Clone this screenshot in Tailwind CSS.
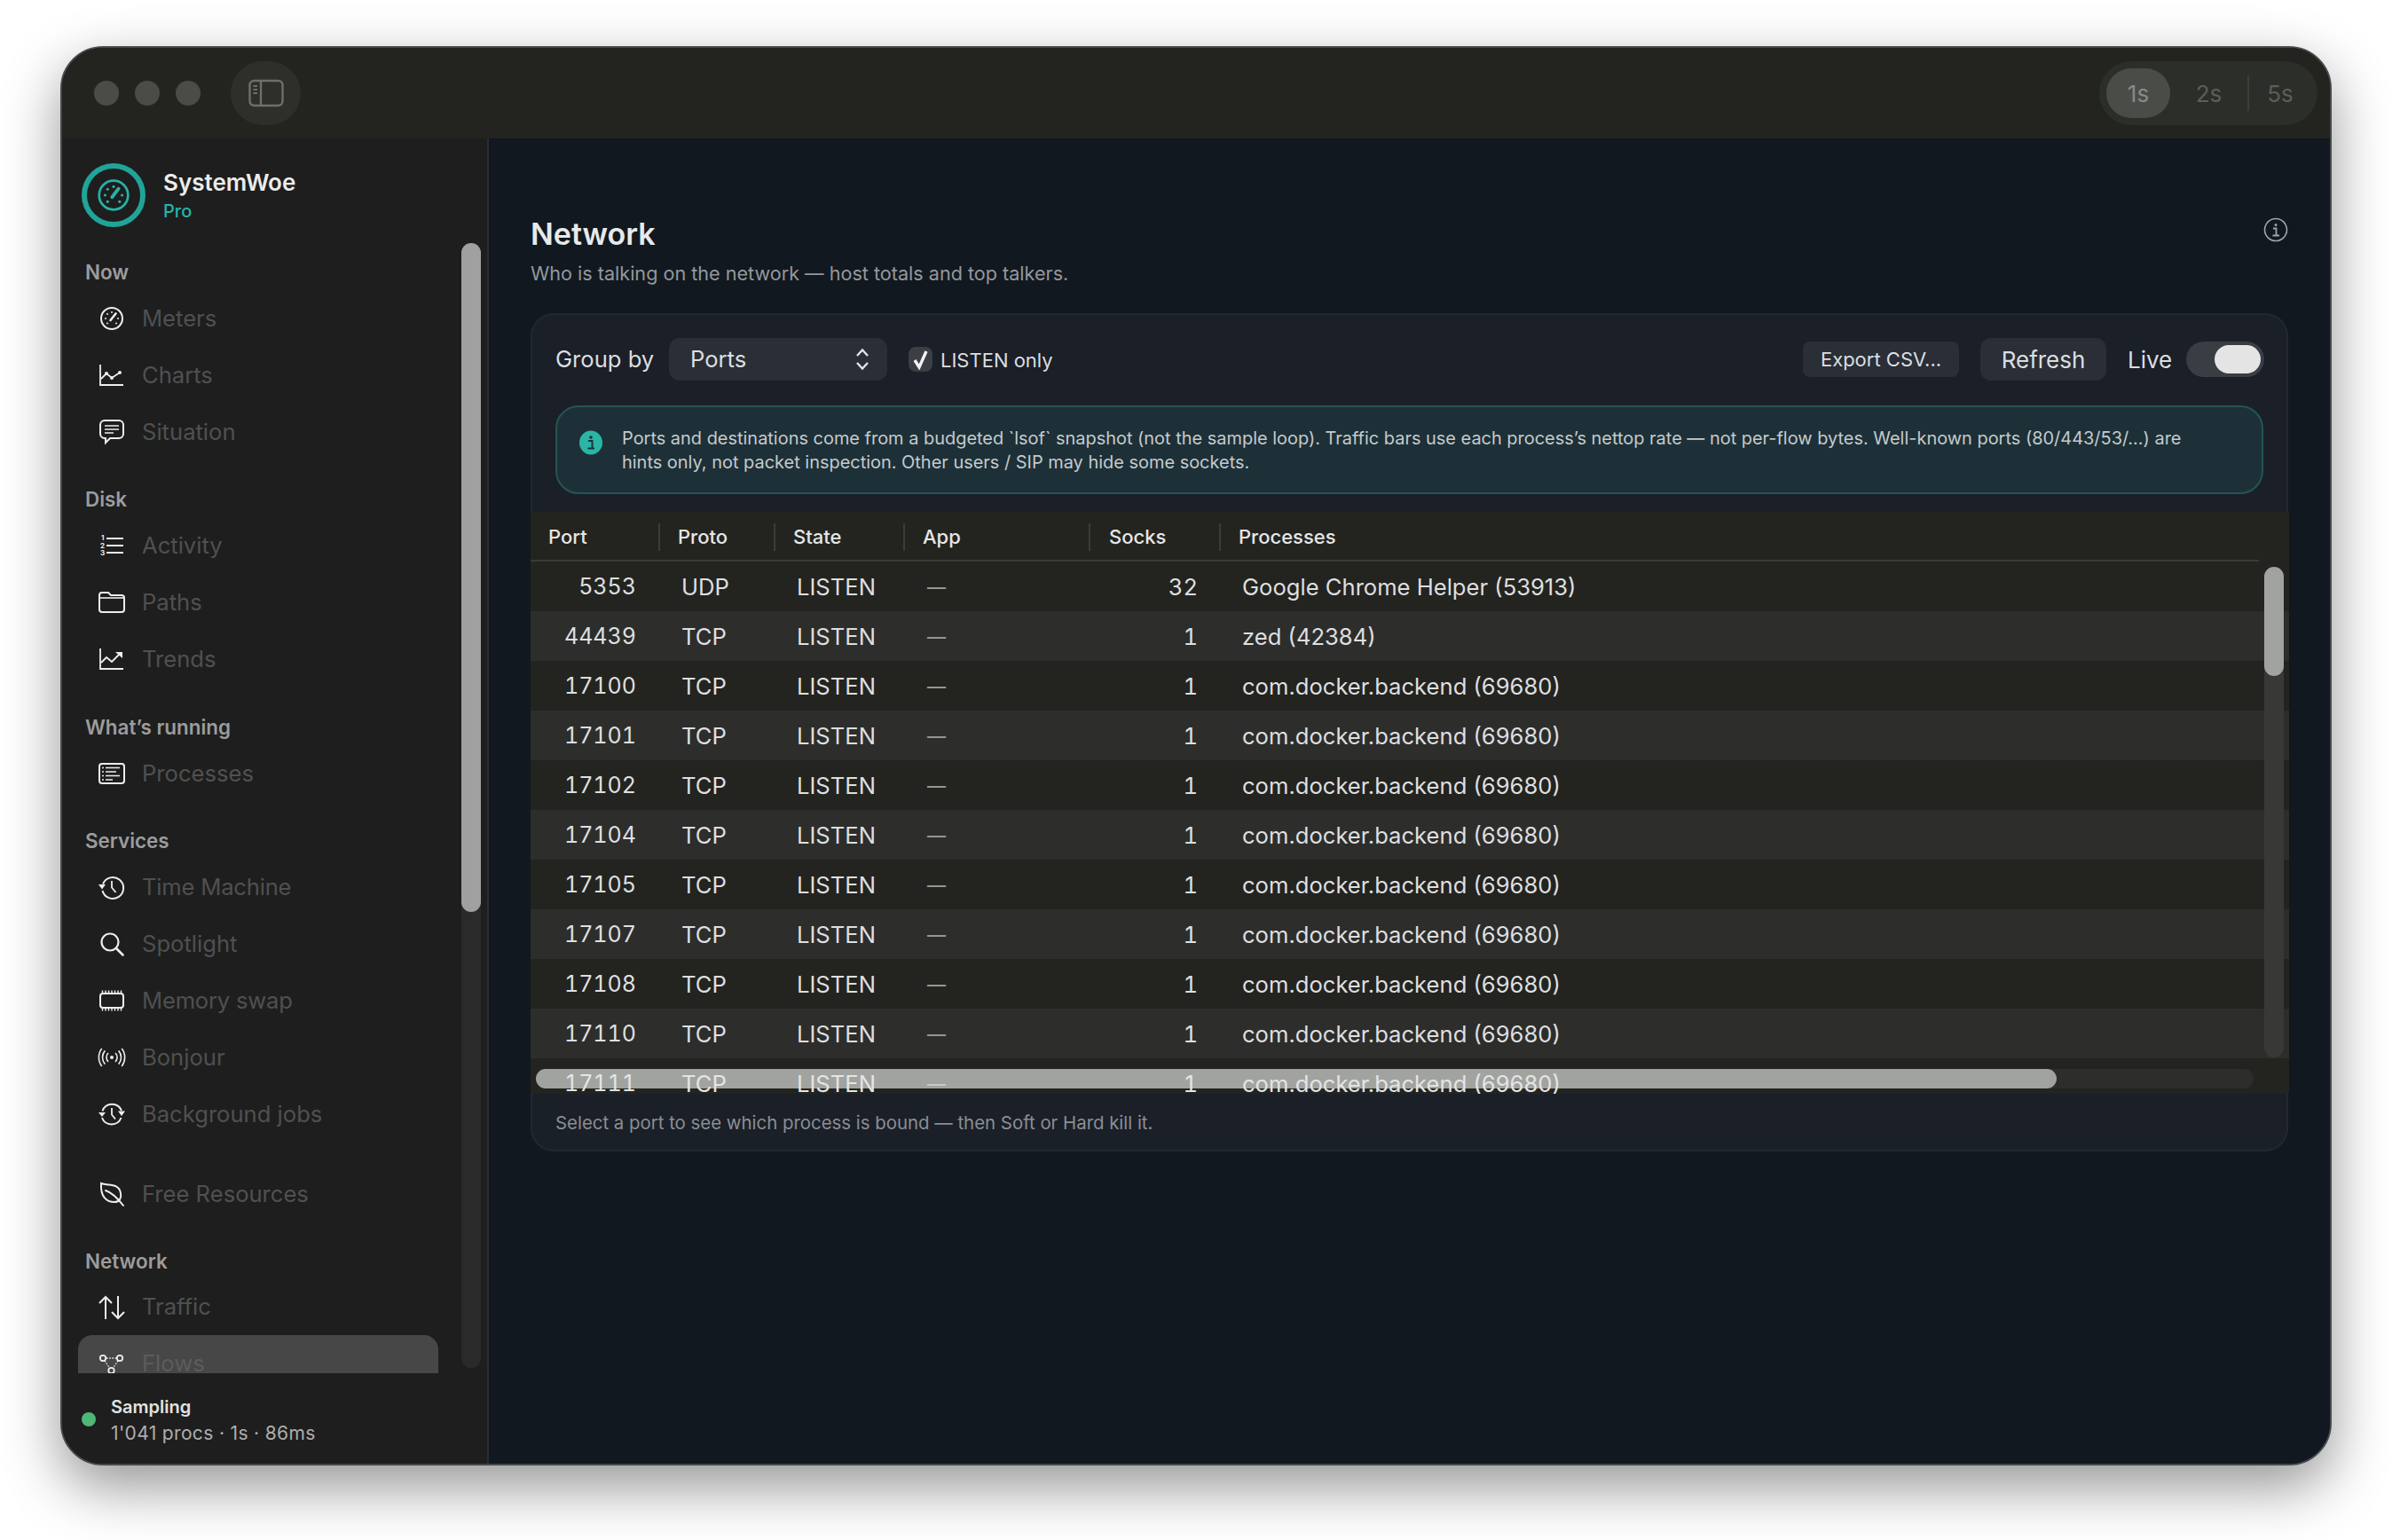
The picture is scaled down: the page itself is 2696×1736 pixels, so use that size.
<!DOCTYPE html>
<html>
<head>
<meta charset="utf-8">
<script src="https://cdn.jsdelivr.net/npm/@tailwindcss/browser@4"></script>
</head>
<body class="bg-white">
<div class="w-[2696px] h-[1736px] pl-[68px] pt-[52px] [font-family:Inter,sans-serif] antialiased overflow-hidden">
<div class="w-[2560px] h-[1600px] rounded-[48px] overflow-hidden border-2 border-[#47484b] flex flex-col shadow-[0_24px_64px_rgba(0,0,0,0.42)] bg-[#121820]">
  <!-- title bar -->
  <div class="h-[102px] shrink-0 bg-[#23241f] flex items-center justify-between pl-[36px] pr-[14px]">
    <div class="flex items-center">
      <span class="w-[28px] h-[28px] rounded-full bg-[#4b4c47]"></span>
      <span class="w-[28px] h-[28px] rounded-full bg-[#4b4c47] ml-[18px]"></span>
      <span class="w-[28px] h-[28px] rounded-full bg-[#4b4c47] ml-[18px]"></span>
      <div class="w-[79px] h-[72px] rounded-full bg-[#2e2f2a] ml-[34px] flex items-center justify-center">
        <svg width="40" height="32" viewBox="0 0 40 32" fill="none" stroke="#6e6f6a" stroke-width="2.4"><rect x="1.5" y="2" width="37" height="28" rx="5"/><path d="M14 2V30"/><path d="M5.5 8H10M5.5 12H10M5.5 16H10" stroke-width="1.8"/></svg>
      </div>
    </div>
    <div class="w-[246px] h-[72px] rounded-full bg-[#2c2e29] flex items-center pl-[8px] text-[26px]">
      <span class="w-[72px] h-[56px] rounded-full bg-[#4a4d47] text-[#888a85] flex items-center justify-center">1s</span>
      <span class="w-[87px] text-center text-[#5c5e59]">2s</span>
      <span class="w-[2px] h-[40px] bg-[#3d3f3a]"></span>
      <span class="w-[70px] text-center text-[#5c5e59]">5s</span>
    </div>
  </div>
  <div class="flex flex-1 min-h-0">
    <!-- sidebar -->
    <aside class="w-[481px] shrink-0 bg-[#1e1e1e] border-r-2 border-[#2a2d33] flex flex-col relative">
      <div class="h-[108px] shrink-0 flex items-start pl-[22px] pt-[28px]">
        <div class="w-[72px] h-[72px] rounded-full border-[6px] border-[#21a498] flex items-center justify-center">
          <svg width="36" height="36" viewBox="0 0 32 32" fill="none" stroke="#26b3a5" stroke-width="2.4"><circle cx="16" cy="16" r="14.5"/><path d="M14.5 18L21 9.5" stroke-width="3.4" stroke-linecap="round"/><g fill="#26b3a5" stroke="none"><circle cx="7.5" cy="16" r="1.4"/><circle cx="10" cy="10" r="1.4"/><circle cx="16" cy="7.5" r="1.4"/><circle cx="24.5" cy="16" r="1.4"/><circle cx="10" cy="22.5" r="1.4"/><circle cx="22" cy="22.5" r="1.4"/></g></svg>
        </div>
        <div class="ml-[20px] mt-[6px]">
          <div class="text-[26px] leading-[32px] font-semibold text-[#ececec] whitespace-nowrap">SystemWoe</div>
          <div class="text-[20px] leading-[32px] font-medium text-[#25b5a6]">Pro</div>
        </div>
      </div>
      <div class="absolute left-[450px] top-[118px] w-[22px] h-[1268px] rounded-full bg-[#2a2a2a]">
        <div class="w-[22px] h-[754px] rounded-full bg-[#a0a0a0]"></div>
      </div>
      <nav class="h-[1284px] shrink-0 overflow-hidden pt-[28px]">
        <div class="pl-[26px] h-[30px] leading-[30px] text-[22.4px] font-semibold text-[#9c9c9c] mb-[5px]">Now</div>
        <div class="w-[406px] ml-[18px] h-[64px] flex items-center pl-[22px] gap-[18px] text-[25.6px] text-[#505050]">
          <svg class="w-8 h-8 shrink-0" viewBox="0 0 32 32" fill="none" stroke="#ededed" stroke-width="2"><circle cx="16" cy="16" r="12"/><path d="M14.5 18L20.5 10.5" stroke-width="2.6" stroke-linecap="round"/><g fill="#ededed" stroke="none"><circle cx="9" cy="16" r="1"/><circle cx="11" cy="11" r="1"/><circle cx="16" cy="9" r="1"/><circle cx="23" cy="16" r="1"/><circle cx="11" cy="21.5" r="1"/><circle cx="21" cy="21.5" r="1"/></g></svg>
          <span>Meters</span></div>
        <div class="w-[406px] ml-[18px] h-[64px] flex items-center pl-[22px] gap-[18px] text-[25.6px] text-[#505050]">
          <svg class="w-8 h-8 shrink-0" viewBox="0 0 32 32" fill="none" stroke="#ededed" stroke-width="1.8"><path d="M3 4V27H29"/><path d="M4 20L10 14L16 19L25 13"/><g fill="#ededed" stroke="none"><circle cx="10" cy="14" r="2"/><circle cx="16" cy="19" r="2"/><circle cx="25" cy="13" r="2"/></g></svg>
          <span>Charts</span></div>
        <div class="w-[406px] ml-[18px] h-[64px] flex items-center pl-[22px] gap-[18px] text-[25.6px] text-[#505050]">
          <svg class="w-8 h-8 shrink-0" viewBox="0 0 32 32" fill="none" stroke="#ededed" stroke-width="2"><path d="M8 3H24A5 5 0 0 1 29 8V18A5 5 0 0 1 24 23H14L9 28V23H8A5 5 0 0 1 3 18V8A5 5 0 0 1 8 3Z"/><path d="M8 9H24M8 13H24M8 17H18" stroke-width="1.6"/></svg>
          <span>Situation</span></div>

        <div class="mt-[29px] pl-[26px] h-[30px] leading-[30px] text-[22.4px] font-semibold text-[#9c9c9c] mb-[5px]">Disk</div>
        <div class="w-[406px] ml-[18px] h-[64px] flex items-center pl-[22px] gap-[18px] text-[25.6px] text-[#505050]">
          <svg class="w-8 h-8 shrink-0" viewBox="0 0 32 32" fill="none" stroke="#ededed" stroke-width="1.8"><path d="M10 8H29M10 16H29M10 24H29"/><g fill="#ededed" stroke="none" font-size="8" font-weight="700" font-family="Inter"><text x="4" y="10">1</text><text x="3" y="18.5">2</text><text x="3" y="27">3</text></g></svg>
          <span>Activity</span></div>
        <div class="w-[406px] ml-[18px] h-[64px] flex items-center pl-[22px] gap-[18px] text-[25.6px] text-[#505050]">
          <svg class="w-8 h-8 shrink-0" viewBox="0 0 32 32" fill="none" stroke="#ededed" stroke-width="2"><path d="M5 5H12L15 8H27A3 3 0 0 1 30 11V24A3 3 0 0 1 27 27H5A3 3 0 0 1 2 24V8A3 3 0 0 1 5 5Z"/><path d="M2 11H30" stroke-width="1.6"/></svg>
          <span>Paths</span></div>
        <div class="w-[406px] ml-[18px] h-[64px] flex items-center pl-[22px] gap-[18px] text-[25.6px] text-[#505050]">
          <svg class="w-8 h-8 shrink-0" viewBox="0 0 32 32" fill="none" stroke="#ededed" stroke-width="1.8"><path d="M3 4V27H29"/><path d="M4 20L10 14L16 19L25 10"/><path d="M20 8H28V15L20 8Z" fill="#ededed" stroke="none"/></svg>
          <span>Trends</span></div>

        <div class="mt-[30px] pl-[26px] h-[30px] leading-[30px] text-[22.4px] font-semibold text-[#9c9c9c] mb-[5px]">What’s running</div>
        <div class="w-[406px] ml-[18px] h-[64px] flex items-center pl-[22px] gap-[18px] text-[25.6px] text-[#505050]">
          <svg class="w-8 h-8 shrink-0" viewBox="0 0 32 32" fill="none" stroke="#ededed" stroke-width="2"><rect x="2" y="5" width="28" height="22" rx="3"/><path d="M9 10.5H25M9 15H21M9 19.5H25M9 24H17" stroke-width="1.4" transform="translate(0 -1)"/><g fill="#ededed" stroke="none"><circle cx="6" cy="9.5" r="1"/><circle cx="6" cy="14" r="1"/><circle cx="6" cy="18.5" r="1"/><circle cx="6" cy="23" r="1"/></g></svg>
          <span>Processes</span></div>

        <div class="mt-[29px] pl-[26px] h-[30px] leading-[30px] text-[22.4px] font-semibold text-[#9c9c9c] mb-[5px]">Services</div>
        <div class="w-[406px] ml-[18px] h-[64px] flex items-center pl-[22px] gap-[18px] text-[25.6px] text-[#505050]">
          <svg class="w-8 h-8 shrink-0" viewBox="0 0 32 32" fill="none" stroke="#ededed" stroke-width="2"><path d="M6 12.5A12 12 0 1 1 5.5 20"/><path d="M1 13H9L5 18.5Z" fill="#ededed" stroke="none"/><path d="M16 9V16.5L20.5 22" stroke-width="1.8"/></svg>
          <span class="tracking-[-0.2px]">Time Machine</span></div>
        <div class="w-[406px] ml-[18px] h-[64px] flex items-center pl-[22px] gap-[18px] text-[25.6px] text-[#505050]">
          <svg class="w-8 h-8 shrink-0" viewBox="0 0 32 32" fill="none" stroke="#ededed" stroke-width="2.2"><circle cx="14" cy="14" r="9.5"/><path d="M21 21L28.5 28.5" stroke-linecap="round" stroke-width="2.6"/></svg>
          <span>Spotlight</span></div>
        <div class="w-[406px] ml-[18px] h-[64px] flex items-center pl-[22px] gap-[18px] text-[25.6px] text-[#505050]">
          <svg class="w-8 h-8 shrink-0" viewBox="0 0 32 32" fill="none" stroke="#ededed" stroke-width="2"><rect x="3" y="8" width="26" height="16" rx="3"/><path d="M5.5 4.5V8M9 4.5V8M12.5 4.5V8M16 4.5V8M19.5 4.5V8M23 4.5V8M26.5 4.5V8M5.5 24V27.5M9 24V27.5M12.5 24V27.5M16 24V27.5M19.5 24V27.5M23 24V27.5M26.5 24V27.5" stroke-width="1.5"/></svg>
          <span class="tracking-[-0.2px]">Memory swap</span></div>
        <div class="w-[406px] ml-[18px] h-[64px] flex items-center pl-[22px] gap-[18px] text-[25.6px] text-[#505050]">
          <svg class="w-8 h-8 shrink-0" viewBox="0 0 32 32" fill="none" stroke="#ededed" stroke-width="1.8"><circle cx="16" cy="16" r="2" fill="#ededed" stroke="none"/><path d="M11.5 10.5A8 8 0 0 0 11.5 21.5M20.5 10.5A8 8 0 0 1 20.5 21.5M7.5 7.5A13 13 0 0 0 7.5 24.5M24.5 7.5A13 13 0 0 1 24.5 24.5M3.5 5A18 18 0 0 0 3.5 27M28.5 5A18 18 0 0 1 28.5 27" transform="translate(1.6 1.6) scale(.9)"/></svg>
          <span>Bonjour</span></div>
        <div class="w-[406px] ml-[18px] h-[64px] flex items-center pl-[22px] gap-[18px] text-[25.6px] text-[#505050]">
          <svg class="w-8 h-8 shrink-0" viewBox="0 0 32 32" fill="none" stroke="#ededed" stroke-width="2"><path d="M5.5 12.5A11.5 11.5 0 0 1 27 12M26.5 20A11.5 11.5 0 0 1 5 20"/><path d="M1 14H9L5 19ZM23 12.5H31L27 18Z" fill="#ededed" stroke="none"/><path d="M16 9V16.5L20 21.5" stroke-width="1.8"/></svg>
          <span>Background jobs</span></div>

        <div class="mt-[26px] w-[406px] ml-[18px] h-[64px] flex items-center pl-[22px] gap-[18px] text-[25.6px] text-[#505050]">
          <svg class="w-8 h-8 shrink-0" viewBox="0 0 32 32" fill="none" stroke="#ededed" stroke-width="2"><path d="M4 4C12 7 24 3 26 15C27 20 25 25 19 25C10 25 3 19 4 4Z"/><path d="M9 12C15 14 22 20 29 29" stroke-linecap="round"/></svg>
          <span>Free Resources</span></div>

        <div class="mt-[29px] pl-[26px] h-[30px] leading-[30px] text-[22.4px] font-semibold text-[#9c9c9c] mb-[5px]">Network</div>
        <div class="w-[406px] ml-[18px] h-[63px] flex items-center pl-[22px] gap-[18px] text-[25.6px] text-[#505050]">
          <svg class="w-8 h-8 shrink-0" viewBox="0 0 32 32" fill="none" stroke="#ededed" stroke-width="2"><path d="M9 29V4M2 11L9 4L16 11M23 3V28M16 21L23 28L30 21"/></svg>
          <span>Traffic</span></div>
        <div class="w-[406px] ml-[18px] h-[64px] flex items-center pl-[22px] gap-[18px] text-[25.6px] text-[#5c5c5c] bg-[#474747] rounded-[16px]">
          <svg class="w-8 h-8 shrink-0" viewBox="0 0 32 32" fill="none" stroke="#ededed" stroke-width="1.8"><circle cx="6" cy="10" r="3.2"/><circle cx="25" cy="10" r="3.2"/><circle cx="15.5" cy="24" r="3.2"/><path d="M10 10H21M8 13L13.5 21M23 13L17.5 21" stroke-dasharray="1.6 1.6" stroke-width="1.4"/></svg>
          <span>Flows</span></div>
      </nav>
      <div class="flex-1 flex items-start pl-[22px] pt-[23px]">
        <span class="w-[16px] h-[16px] rounded-full bg-[#4fb776] mt-[21px] shrink-0"></span>
        <div class="ml-[17px]">
          <div class="text-[20px] leading-[30px] font-semibold text-[#e2e2e2]">Sampling</div>
          <div class="text-[21px] leading-[30px] tracking-[0.35px] text-[#aeaeae] whitespace-nowrap">1'041 procs · 1s · 86ms</div>
        </div>
      </div>
    </aside>
    <!-- main -->
    <main class="flex-1 min-w-0 bg-[#121820] pl-[47px] pr-[47px] pt-[88px]">
      <div class="flex items-start justify-between">
        <div>
          <h1 class="text-[34px] leading-[40px] font-semibold text-[#e8e9ea]">Network</h1>
          <p class="mt-[10px] text-[21.6px] leading-[28px] text-[#94979b]">Who is talking on the network — host totals and top talkers.</p>
        </div>
        <svg class="mt-[1px]" width="28" height="28" viewBox="0 0 28 28" fill="none" stroke="#a0a3a7" stroke-width="1.6"><circle cx="14" cy="14" r="12.5"/><circle cx="14" cy="8.5" r="1.5" fill="#a0a3a7" stroke="none"/><path d="M11 12.5H14.5V20M10.5 20.5H18" stroke-width="1.8"/></svg>
      </div>
      <section class="mt-[31px] w-[1981px] h-[945px] rounded-[26px] bg-[#1a1f28] inset-ring-2 inset-ring-[#222833]">
        <!-- toolbar -->
        <div class="pt-[28px] pl-[28px] pr-[27px] h-[76px] flex items-center text-[#dcdee0]">
          <span class="text-[25.6px] w-[128px]">Group by</span>
          <div class="w-[246px] h-[48px] rounded-[12px] bg-[#2a2e36] flex items-center justify-between pl-[24px] pr-[20px] text-[25.6px]">
            <span>Ports</span>
            <svg width="16" height="26" viewBox="0 0 16 26" fill="none" stroke="#e4e4e4" stroke-width="2.4"><path d="M2 9L8 2.5L14 9M2 17L8 23.5L14 17"/></svg>
          </div>
          <div class="ml-[24px] w-[27px] h-[28px] rounded-[8px] bg-[#3b3e43] flex items-center justify-center">
            <svg width="22" height="24" viewBox="0 0 22 24" fill="none" stroke="#f2f2f2" stroke-width="3.4"><path d="M4 13L9 21L17 3"/></svg>
          </div>
          <span class="ml-[9px] pt-[2px] text-[22px]">LISTEN only</span>
          <div class="ml-auto w-[176px] h-[40px] rounded-[8px] bg-[#2a2e36] flex items-center justify-center text-[22px] whitespace-nowrap">Export CSV...</div>
          <div class="ml-[24px] w-[142px] h-[48px] rounded-[12px] bg-[#2a2e36] flex items-center justify-center text-[26px]">Refresh</div>
          <span class="ml-[24px] text-[26px] w-[66px]">Live</span>
          <div class="w-[88px] h-[40px] rounded-full bg-[#3a3d43] flex items-center justify-end pr-[4px]">
            <span class="w-[52px] h-[32px] rounded-full bg-[#e4e4e4]"></span>
          </div>
        </div>
        <!-- banner -->
        <div class="mt-[28px] ml-[28px] w-[1925px] h-[100px] rounded-[26px] bg-[#1d3038] border-2 border-[#235553] flex items-center pl-[25px] pr-[60px]">
          <svg class="shrink-0 self-start mt-[26px]" width="26" height="28" viewBox="0 0 26 28"><ellipse cx="13" cy="14" rx="13" ry="13.5" fill="#2bb5a5"/><circle cx="13" cy="8" r="1.8" fill="#1d3038"/><path d="M10 12H14.5V20M9.5 20.5H17" fill="none" stroke="#1d3038" stroke-width="2"/></svg>
          <p class="ml-[22px] pt-[2px] text-[19.94px] leading-[27px] text-[#c5cacc]">Ports and destinations come from a budgeted `lsof` snapshot (not the sample loop). Traffic bars use each process’s nettop rate — not per-flow bytes. Well-known ports (80/443/53/…) are hints only, not packet inspection. Other users / SIP may hide some sockets.</p>
        </div>
        <!-- table -->
        <div class="mt-[20px] w-[1982px] h-[656px] bg-[#23241f] relative overflow-hidden">
          <div class="w-[1948px] h-[56px] pt-[2px] border-b-2 border-[#3a3b36] grid grid-cols-[146px_130px_146px_209px_147px_1fr] items-center text-[22px] font-medium text-[#e6e6e6]">
            <div class="h-[31px] leading-[31px] pl-[20px] border-r-2 border-[#3b3c38]">Port</div>
            <div class="h-[31px] leading-[31px] pl-[20px] border-r-2 border-[#3b3c38]">Proto</div>
            <div class="h-[31px] leading-[31px] pl-[20px] border-r-2 border-[#3b3c38]">State</div>
            <div class="h-[31px] leading-[31px] pl-[20px] border-r-2 border-[#3b3c38]">App</div>
            <div class="h-[31px] leading-[31px] pl-[21px] border-r-2 border-[#3b3c38]">Socks</div>
            <div class="h-[31px] leading-[31px] pl-[20px]">Processes</div>
          </div>
          <div class="h-[56px] pt-[2px] grid grid-cols-[146px_130px_146px_209px_147px_1fr] items-center text-[25.6px] text-[#dedfe0]"><div class="text-right pr-[27px] text-[25px] tabular-nums">5353</div><div class="pl-[24px]">UDP</div><div class="pl-[24px]">LISTEN</div><div class="pl-[25px] text-[21px] font-medium text-[#969793]">—</div><div class="text-right pr-[26px] tabular-nums">32</div><div class="pl-[24px]">Google Chrome Helper (53913)</div></div>
          <div class="h-[56px] pt-[2px] bg-[#2d2e2b] grid grid-cols-[146px_130px_146px_209px_147px_1fr] items-center text-[25.6px] text-[#dedfe0]"><div class="text-right pr-[27px] text-[25px] tabular-nums">44439</div><div class="pl-[24px]">TCP</div><div class="pl-[24px]">LISTEN</div><div class="pl-[25px] text-[21px] font-medium text-[#969793]">—</div><div class="text-right pr-[26px] tabular-nums">1</div><div class="pl-[24px]">zed (42384)</div></div>
          <div class="h-[56px] pt-[2px] grid grid-cols-[146px_130px_146px_209px_147px_1fr] items-center text-[25.6px] text-[#dedfe0]"><div class="text-right pr-[27px] text-[25px] tabular-nums">17100</div><div class="pl-[24px]">TCP</div><div class="pl-[24px]">LISTEN</div><div class="pl-[25px] text-[21px] font-medium text-[#969793]">—</div><div class="text-right pr-[26px] tabular-nums">1</div><div class="pl-[24px]">com.docker.backend (69680)</div></div>
          <div class="h-[56px] pt-[2px] bg-[#2d2e2b] grid grid-cols-[146px_130px_146px_209px_147px_1fr] items-center text-[25.6px] text-[#dedfe0]"><div class="text-right pr-[27px] text-[25px] tabular-nums">17101</div><div class="pl-[24px]">TCP</div><div class="pl-[24px]">LISTEN</div><div class="pl-[25px] text-[21px] font-medium text-[#969793]">—</div><div class="text-right pr-[26px] tabular-nums">1</div><div class="pl-[24px]">com.docker.backend (69680)</div></div>
          <div class="h-[56px] pt-[2px] grid grid-cols-[146px_130px_146px_209px_147px_1fr] items-center text-[25.6px] text-[#dedfe0]"><div class="text-right pr-[27px] text-[25px] tabular-nums">17102</div><div class="pl-[24px]">TCP</div><div class="pl-[24px]">LISTEN</div><div class="pl-[25px] text-[21px] font-medium text-[#969793]">—</div><div class="text-right pr-[26px] tabular-nums">1</div><div class="pl-[24px]">com.docker.backend (69680)</div></div>
          <div class="h-[56px] pt-[2px] bg-[#2d2e2b] grid grid-cols-[146px_130px_146px_209px_147px_1fr] items-center text-[25.6px] text-[#dedfe0]"><div class="text-right pr-[27px] text-[25px] tabular-nums">17104</div><div class="pl-[24px]">TCP</div><div class="pl-[24px]">LISTEN</div><div class="pl-[25px] text-[21px] font-medium text-[#969793]">—</div><div class="text-right pr-[26px] tabular-nums">1</div><div class="pl-[24px]">com.docker.backend (69680)</div></div>
          <div class="h-[56px] pt-[2px] grid grid-cols-[146px_130px_146px_209px_147px_1fr] items-center text-[25.6px] text-[#dedfe0]"><div class="text-right pr-[27px] text-[25px] tabular-nums">17105</div><div class="pl-[24px]">TCP</div><div class="pl-[24px]">LISTEN</div><div class="pl-[25px] text-[21px] font-medium text-[#969793]">—</div><div class="text-right pr-[26px] tabular-nums">1</div><div class="pl-[24px]">com.docker.backend (69680)</div></div>
          <div class="h-[56px] pt-[2px] bg-[#2d2e2b] grid grid-cols-[146px_130px_146px_209px_147px_1fr] items-center text-[25.6px] text-[#dedfe0]"><div class="text-right pr-[27px] text-[25px] tabular-nums">17107</div><div class="pl-[24px]">TCP</div><div class="pl-[24px]">LISTEN</div><div class="pl-[25px] text-[21px] font-medium text-[#969793]">—</div><div class="text-right pr-[26px] tabular-nums">1</div><div class="pl-[24px]">com.docker.backend (69680)</div></div>
          <div class="h-[56px] pt-[2px] grid grid-cols-[146px_130px_146px_209px_147px_1fr] items-center text-[25.6px] text-[#dedfe0]"><div class="text-right pr-[27px] text-[25px] tabular-nums">17108</div><div class="pl-[24px]">TCP</div><div class="pl-[24px]">LISTEN</div><div class="pl-[25px] text-[21px] font-medium text-[#969793]">—</div><div class="text-right pr-[26px] tabular-nums">1</div><div class="pl-[24px]">com.docker.backend (69680)</div></div>
          <div class="h-[56px] pt-[2px] bg-[#2d2e2b] grid grid-cols-[146px_130px_146px_209px_147px_1fr] items-center text-[25.6px] text-[#dedfe0]"><div class="text-right pr-[27px] text-[25px] tabular-nums">17110</div><div class="pl-[24px]">TCP</div><div class="pl-[24px]">LISTEN</div><div class="pl-[25px] text-[21px] font-medium text-[#969793]">—</div><div class="text-right pr-[26px] tabular-nums">1</div><div class="pl-[24px]">com.docker.backend (69680)</div></div>
          <!-- overlay scrollbars -->
          <div class="absolute left-[1954px] top-[62px] w-[22px] h-[553px] rounded-full bg-[#383936]">
            <div class="w-[22px] h-[123px] rounded-full bg-[#a1a3a0]"></div>
          </div>
          <div class="absolute left-[6px] bottom-[6px] w-[1936px] h-[22px] rounded-full bg-[#2d2e2b]">
            <div class="w-[1714px] h-[22px] rounded-full bg-[#a1a3a0]"></div>
          </div>
          <div class="relative h-[56px] pt-[2px] grid grid-cols-[146px_130px_146px_209px_147px_1fr] items-center text-[25.6px] text-[#e4e5e5]"><div class="text-right pr-[27px] text-[25px] tabular-nums">17111</div><div class="pl-[24px]">TCP</div><div class="pl-[24px]">LISTEN</div><div class="pl-[25px] text-[21px] font-medium text-[#c8c9c6]">—</div><div class="text-right pr-[26px] tabular-nums">1</div><div class="pl-[24px]">com.docker.backend (69680)</div></div>
        </div>
        <div class="pl-[28px] h-[65px] pt-[19px] text-[20.4px] leading-[28px] text-[#8b8e93]">Select a port to see which process is bound — then Soft or Hard kill it.</div>
      </section>
    </main>
  </div>
</div>
</div>
</body>
</html>
